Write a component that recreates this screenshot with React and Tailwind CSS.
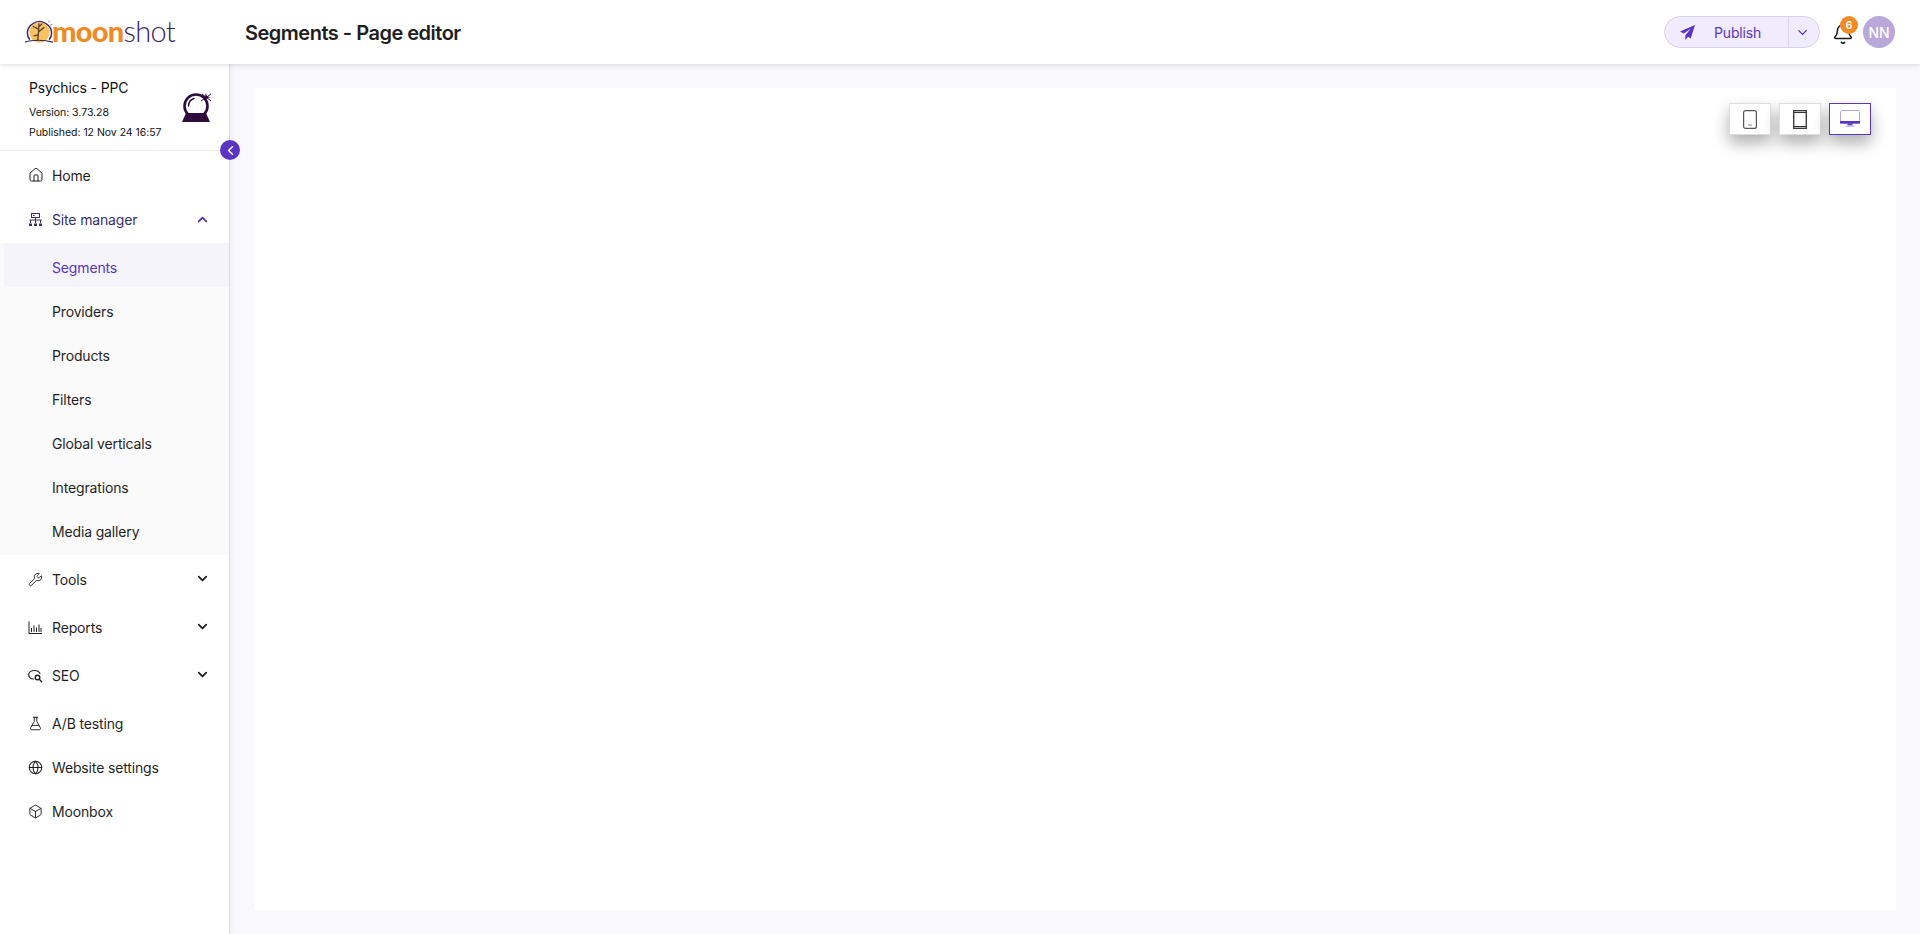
import React from "react";
import { House, Wrench, FlaskConical, Globe, Box, ChevronDown, ChevronUp, ChevronLeft, Bell } from "lucide-react";

const Logo = () => (
  <div className="flex items-center">
    <svg width="28" height="25" viewBox="0 0 29 25" className="shrink-0 -ml-[1px]">
      <circle cx="15" cy="12.500" r="10.500" fill="#f7c25f" />
      <path d="M8 3.500A11 11 0 0 0 5 20M22 3.500A11 11 0 0 1 25 20M8 3.500A11 11 0 0 1 22 3.500" fill="none" stroke="#3b2363" strokeWidth="1.500" />
      <path d="M0 22.500c4-1.500 9-2 14-2s10 .5 15 2" fill="none" stroke="#3b2363" strokeWidth="1.200" />
      <path d="M13 21c1-5 1-11 1.500-18M14 9L8 6M14 12l6-5M14 7l4-4M14 15l-5 1" fill="none" stroke="#5a3a2c" strokeWidth="1.300" />
      <path d="M24 2l2-1.500M26 5l2.500-1" stroke="#3b2363" strokeWidth=".6" />
    </svg>
    <span className="-ml-[1px] text-[29px] leading-none tracking-[-0.7px] font-['Lato',sans-serif] -mt-[3px]">
      <span className="font-black text-[#f08a24]">moon</span>
      <span className="font-light text-[#3b2363]">shot</span>
    </span>
  </div>
);

const CrystalBall = () => (
  <svg width="30" height="30" viewBox="0 0 30 30" className="shrink-0">
    <circle cx="14" cy="13" r="11.500" fill="none" stroke="#2d0c3d" strokeWidth="2.600" />
    <path d="M6.500 13c0-4 2.500-6.500 5.500-7.500" fill="none" stroke="#2d0c3d" strokeWidth="1.500" strokeLinecap="round" />
    <path d="M4 20h20l4 9H0z" fill="#2d0c3d" />
    <path d="M24 0l1 3.200 3.500 1-3.500 1-1 3.200-1-3.200-3.500-1 3.500-1z" fill="#2d0c3d" />
    <path d="M19 8l10-7M29 8L20 1" stroke="#2d0c3d" strokeWidth="1" />
  </svg>
);

const SiteIcon = (p) => (
  <svg width="15" height="15" viewBox="0 0 15 15" fill="none" stroke="currentColor" strokeWidth="1" {...p}>
    <rect x="3.500" y="1.500" width="8" height="4" />
    <path d="M5 3.500h1.500" />
    <path d="M1.500 8h12M2.500 8v3M12.500 8v3M7.500 5.500V11" />
    <rect x="1" y="11.500" width="3" height="2.500" fill="currentColor" stroke="none" />
    <rect x="6" y="11.500" width="3" height="2.500" fill="currentColor" stroke="none" />
    <rect x="11" y="11.500" width="3" height="2.500" fill="currentColor" stroke="none" />
  </svg>
);

const SeoIcon = () => (
  <svg width="15" height="15" viewBox="0 0 15 15" fill="none" stroke="currentColor" strokeWidth="1.200" strokeLinecap="round">
    <path d="M5.500 11C2.800 11 .7 9.300 .7 6.800S3.300 2.500 6.500 2.500c2.500 0 4.600 1 5.500 3" />
    <circle cx="9.500" cy="9.500" r="2.300" strokeWidth="1.400" />
    <path d="M11.500 11.500l2.200 2.200" strokeWidth="1.400" />
  </svg>
);

const BarsIcon = () => (
  <svg width="15" height="15" viewBox="0 0 15 15" fill="none" stroke="currentColor" strokeWidth="1">
    <path d="M1 1.500V13.500H14" />
    <path d="M3.500 12V8M6 12V5.500M8.500 12V7.500M11 12V4.500M13 12V8" />
  </svg>
);

const Item = ({ icon, label, chev, className = "", labelClass = "text-[#1f1f1f]" }) => (
  <div className={`flex items-center pl-[28px] pr-[19px] ${labelClass} ${className}`}>
    <span className="w-[24px] flex justify-start shrink-0">{icon}</span>
    <span className="flex-1">{label}</span>
    {chev}
  </div>
);

const Sub = ({ label, active }) => (
  <div className={`h-[44px] flex items-center pt-[4px] ${active ? "bg-[#f6f4fb] text-[#5b34c4] ml-[4px] pl-[48px]" : "text-[#1f1f1f] pl-[52px]"}`}>
    {label}
  </div>
);

const Down = () => <ChevronDown size={15} strokeWidth={2.800} className="text-[#1a1a1a] -mt-[2px]" />;

const TabletSmall = () => (
  <svg width="14" height="19" viewBox="0 0 14 19" fill="none">
    <rect x=".6" y=".6" width="12.800" height="17.800" rx="2" stroke="#555" strokeWidth="1.200" fill="#fff" />
    <rect x="5" y="14.500" width="4" height="1" fill="#888" />
  </svg>
);

const TabletBig = () => (
  <svg width="14" height="19" viewBox="0 0 14 19" fill="none">
    <rect x=".7" y=".7" width="12.600" height="17.600" stroke="#333" strokeWidth="1.300" fill="#fff" />
    <path d="M0 2.500h14M0 16.500h14" stroke="#333" strokeWidth="1.200" />
  </svg>
);

const MonitorIcon = () => (
  <svg width="20" height="18" viewBox="0 0 20 18" fill="none">
    <rect x=".5" y=".5" width="19" height="13" rx="1" stroke="#b5a5e6" fill="#fff" />
    <rect x="0" y="11" width="20" height="2.500" fill="#5b34c4" />
    <rect x="7.500" y="13.500" width="5" height="2" fill="#5b34c4" />
    <rect x="5.500" y="15.500" width="9" height="1.500" fill="#c9bdf0" />
  </svg>
);

const ViewBtn = ({ children, active }) => (
  <div className={`w-[42px] h-[32px] flex items-center justify-center bg-white shadow-[0_8px_16px_rgba(0,0,0,0.32)] ${active ? "border border-[#5b34c4]" : "border border-[#dedede]"}`}>
    {children}
  </div>
);

export default function App() {
  return (
    <div className="h-[934px] w-[1920px] flex flex-col bg-white overflow-hidden font-['Inter',sans-serif] text-[14px] tracking-[-0.15px] text-[#1f1f1f]">
      <header className="relative z-20 h-[64px] shrink-0 bg-white flex items-center pl-[26px] pr-[25px] shadow-[0_1px_5px_rgba(0,0,0,0.14)]">
        <div className="w-[219px] shrink-0"><Logo /></div>
        <h1 className="text-[20px] leading-[28px] font-semibold tracking-[-0.5px] text-[#1e1e1e] mt-[1px]">Segments - Page editor</h1>
        <div className="ml-auto flex items-center">
          <div className="w-[156px] h-[32px] flex rounded-full bg-[#f0ecfd] border border-[#d9d2ec] text-[#5b34c4]">
            <div className="w-[124px] flex items-center pl-[15px] border-r border-[#d9d2ec]">
              <svg width="15" height="15" viewBox="0 0 14 14" className="shrink-0">
                <path d="M14 0L0 6l3.500 2L10 3.500 5 9.500V14l2.500-3 2.500 1.500z" fill="#5b34c4" />
              </svg>
              <span className="ml-[19px]">Publish</span>
            </div>
            <div className="flex-1 flex items-center justify-center pr-[4px]">
              <ChevronDown size={15} strokeWidth={2.200} />
            </div>
          </div>
          <div className="relative ml-[12px] w-[26px] h-[32px] flex items-center">
            <Bell size={22} strokeWidth={1.700} className="text-[#1a1a1a] mt-[3px]" />
            <span className="absolute left-[8px] top-0 w-[18px] h-[18px] rounded-full bg-[#f08a24] text-white text-[11px] font-semibold flex items-center justify-center">6</span>
          </div>
          <div className="ml-[5px] w-[32px] h-[32px] rounded-full bg-[#b9a8d9] text-white text-[14px] font-medium flex items-center justify-center">NN</div>
        </div>
      </header>

      <div className="flex-1 flex min-h-0">
        <aside className="relative z-10 w-[230px] shrink-0 bg-white border-r border-[#dedde5] shadow-[2px_0_6px_rgba(60,50,90,0.05)]">
          <div className="h-[87px] border-b border-[#ececf0] flex pl-[29px] pr-[17px]">
            <div className="flex-1 pt-[15px]">
              <div className="text-[14px] leading-[18px] text-[#111]">Psychics - PPC</div>
              <div className="mt-[6px] text-[10.500px] leading-[20px] tracking-[-0.03px] text-[#111]">Version: 3.73.28</div>
              <div className="text-[10.500px] leading-[20px] tracking-[-0.03px] text-[#111]">Published: 12 Nov 24 16:57</div>
            </div>
            <div className="pt-[29px]"><CrystalBall /></div>
          </div>
          <button className="absolute left-[220px] top-[76px] w-[20px] h-[20px] rounded-full bg-[#5b34c4] text-white flex items-center justify-center">
            <ChevronLeft size={15} strokeWidth={2.500} />
          </button>
          <nav className="pt-[2px]">
            <Item className="h-[44px]" icon={<House size={16} strokeWidth={1.500} />} label="Home" />
            <Item className="h-[44px] mb-[2px]" labelClass="text-[#38306b]" icon={<SiteIcon />} label="Site manager" chev={<ChevronUp size={15} strokeWidth={2.800} className="text-[#4a2fa8]" />} />
            <div className="bg-[#fafafb] pb-[4px]">
              <Sub label="Segments" active />
              <Sub label="Providers" />
              <Sub label="Products" />
              <Sub label="Filters" />
              <Sub label="Global verticals" />
              <Sub label="Integrations" />
              <Sub label="Media gallery" />
            </div>
            <Item className="h-[48px]" icon={<Wrench size={15} strokeWidth={1.500} />} label="Tools" chev={<Down />} />
            <Item className="h-[48px]" icon={<BarsIcon />} label="Reports" chev={<Down />} />
            <Item className="h-[48px] mb-[2px]" icon={<SeoIcon />} label="SEO" chev={<Down />} />
            <Item className="h-[44px]" icon={<FlaskConical size={15} strokeWidth={1.500} />} label="A/B testing" />
            <Item className="h-[44px]" icon={<Globe size={15} strokeWidth={1.700} />} label="Website settings" />
            <Item className="h-[44px]" icon={<Box size={15} strokeWidth={1.500} />} label="Moonbox" />
          </nav>
        </aside>

        <main className="flex-1 min-w-0 bg-[#f9f8fd] pl-[24px] pr-[24px] pt-[24px] pb-[24px]">
          <div className="relative h-full bg-white">
            <div className="absolute top-[15px] right-[25px] flex gap-[8px]">
              <ViewBtn><TabletSmall /></ViewBtn>
              <ViewBtn><TabletBig /></ViewBtn>
              <ViewBtn active><MonitorIcon /></ViewBtn>
            </div>
          </div>
        </main>
      </div>
    </div>
  );
}
